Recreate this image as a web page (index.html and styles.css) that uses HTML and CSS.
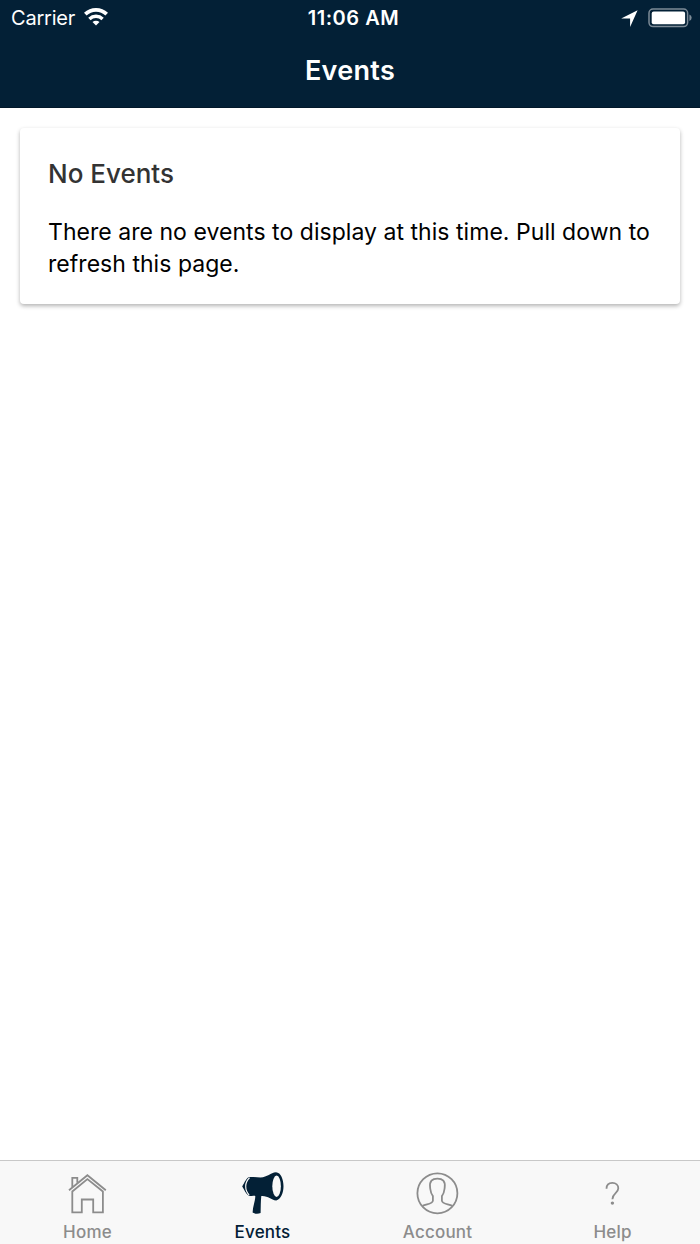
FILE: index.html
```html
<!DOCTYPE html>
<html lang="en">
<head>
    <meta charset="UTF-8">
    <meta name="viewport" content="width=device-width, initial-scale=1.0">
    <title>Events</title>
    <link rel="stylesheet" href="styles.css">
</head>
<body>
    <header class="header">
        <div class="status-bar">
            <div class="status-left">
                <span class="carrier">Carrier</span>
                <svg class="wifi" viewBox="0 0 24 18" width="24" height="18">
                    <path d="M1.3 6.2a15.4 15.4 0 0 1 21.4 0" fill="none" stroke="#fff" stroke-width="3.7"/>
                    <path d="M5.4 10.9a9.6 9.6 0 0 1 13.2 0" fill="none" stroke="#fff" stroke-width="3.4"/>
                    <path d="M8.5 14.1a5 5 0 0 1 7 0L12 17.6z" fill="#fff"/>
                </svg>
            </div>
            <span class="time">11:06 AM</span>
            <div class="status-right">
                <svg class="location" viewBox="0 0 17 17" width="17" height="17">
                    <path d="M16.6.2L9.1 16.9V8.6H.2z" fill="#fff"/>
                </svg>
                <svg class="battery" viewBox="0 0 44 20" width="44" height="20">
                    <rect x="1" y="1" width="38.6" height="17.6" rx="4" fill="none" stroke="#7d8b97" stroke-width="1.5"/>
                    <rect x="3.7" y="3.6" width="33.4" height="12.6" rx="2" fill="#fff"/>
                    <path d="M41.4 6.6a3.4 3.4 0 0 1 0 6.4z" fill="#7d8b97"/>
                </svg>
            </div>
        </div>
        <h1 class="title">Events</h1>
    </header>

    <main class="content">
        <div class="card">
            <h2 class="card-title">No Events</h2>
            <p class="card-text">There are no events to display at this time. Pull down to refresh this page.</p>
        </div>
    </main>

    <nav class="tabs">
        <a class="tab">
            <svg class="tab-icon" viewBox="0.5 0 44 44" fill="none" stroke="currentColor" stroke-width="1.8">
                <path d="M3.5 19.2L21.9 4.2l18.4 15"/>
                <path d="M6.8 16V6.8h5v5"/>
                <path d="M6.8 20.5v20.9h9.5V28.5h11.4v12.9h9.7V20.5L21.9 8.1z"/>
            </svg>
            <span>Home</span>
        </a>
        <a class="tab active">
            <svg class="tab-icon" viewBox="0.5 0 44 44">
                <path d="M35.5 1.3C30 1.6 27 6.4 20 6.4C15 6.4 11.5 5.3 8 6.3C5 8.5 4.5 11 1.7 15.4C4.3 19.5 5 22.5 8 24.4C10.5 25.4 13 24.7 14.8 24.9C14.8 30 12.2 35.5 12.1 41.6C14.2 43.2 17.8 43.2 20.1 42.1C20.3 36 20.2 30 20.8 25C28 24.6 30 29 35.8 29.4C40.2 28.6 43 22 43 15.3S40.4 1.5 35.5 1.3z" fill="currentColor"/>
                <ellipse cx="36.1" cy="15.3" rx="4.3" ry="10.7" fill="#f8f8f8"/>
                <path d="M9 6.8c-5 4.7-5 12.2-.4 17.2" fill="none" stroke="#f8f8f8" stroke-width="1.2"/>
            </svg>
            <span>Events</span>
        </a>
        <a class="tab">
            <svg class="tab-icon" viewBox="0.5 0 44 44" fill="none" stroke="currentColor" stroke-width="1.8">
                <circle cx="21.9" cy="22.3" r="20"/>
                <path d="M7.1 34.9C10.5 33 17.2 33.2 17.4 29.8V25.2C15 22.4 15.1 20 14.6 16.4C13.8 10.3 16.6 7.6 21.9 7.6S30 10.3 29.2 16.4C28.7 20 28.8 22.4 26.4 25.2V29.8C26.6 33.2 33.3 33 36.7 34.9"/>
            </svg>
            <span>Account</span>
        </a>
        <a class="tab">
            <svg class="tab-icon" viewBox="0.5 0 44 44">
                <path d="M16 17.7c0-3.8 2.3-5.9 5.9-5.9 3.4 0 5.9 2.2 5.9 5.5 0 5-5.9 4.8-5.9 11" fill="none" stroke="currentColor" stroke-width="1.8"/>
                <circle cx="21.9" cy="32.1" r="1.7" fill="currentColor"/>
            </svg>
            <span>Help</span>
        </a>
    </nav>
</body>
</html>
```

FILE: styles.css
```css
* {
    box-sizing: border-box;
}

body {
    font-family: Inter, sans-serif;
    margin: 0;
    height: 100vh;
    display: flex;
    flex-direction: column;
    background-color: #fff;
    color: #000;
}

.header {
    height: 108px;
    background-color: #032036;
    border-bottom: 1px solid #02182a;
    color: #fff;
}

.status-bar {
    display: grid;
    grid-template-columns: 1fr auto 1fr;
    align-items: center;
    height: 36px;
    padding: 0 8px 0 11px;
}

.status-left, .status-right {
    display: flex;
    align-items: center;
}

.status-left {
    gap: 9px;
}

.wifi {
    margin-top: -2px;
}

.status-right {
    justify-content: flex-end;
    gap: 10px;
}

.carrier {
    font-size: 20px;
    letter-spacing: -0.2px;
}

.time {
    padding-left: 4px;
    font-size: 20px;
    font-weight: 600;
    letter-spacing: 0.5px;
}

.title {
    margin: 0;
    font-size: 27px;
    line-height: 70px;
    font-weight: 600;
    letter-spacing: 0.3px;
    text-align: center;
}

.content {
    flex: 1;
    padding: 20px;
}

.card {
    height: 176px;
    padding: 29px 28px 0;
    border-radius: 4px;
    background-color: #fff;
    box-shadow: 0 2px 4px rgba(0, 0, 0, 0.3);
}

.card-title {
    margin: 0 0 25px;
    font-size: 26px;
    line-height: 34px;
    font-weight: 500;
    color: #333;
}

.card-text {
    margin: 0;
    font-size: 23px;
    line-height: 32px;
    letter-spacing: 0.04px;
}

.tabs {
    display: flex;
    height: 84px;
    border-top: 1px solid #c8c8c8;
    background-color: #f8f8f8;
}

.tab {
    flex: 1;
    display: flex;
    flex-direction: column;
    align-items: center;
    padding-top: 10px;
    font-size: 17px;
    line-height: 34px;
    font-weight: 500;
    letter-spacing: 0.2px;
    color: #8c8c8c;
}

.tab-icon {
    width: 44px;
    height: 44px;
    flex-shrink: 0;
}

.active {
    color: #032036;
}
```
